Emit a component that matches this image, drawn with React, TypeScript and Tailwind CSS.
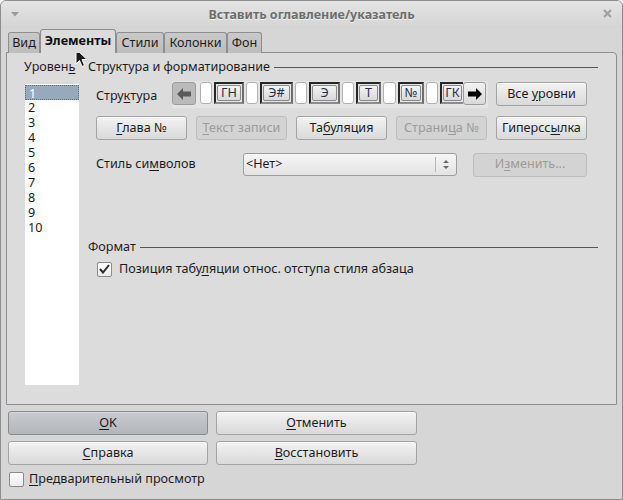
import * as React from "react"
import clsx from "clsx"

const U = ({ children }: { children: React.ReactNode }) => (
  <span className="underline decoration-1 underline-offset-[2px]">{children}</span>
)

function Btn({
  children,
  className,
  disabled,
  primary,
}: {
  children: React.ReactNode
  className?: string
  disabled?: boolean
  primary?: boolean
}) {
  return (
    <div
      className={clsx(
        "flex h-[24px] items-center justify-center rounded-[3px] border",
        disabled
          ? "border-[#bdbdbd] bg-[#d3d3d3] text-[#9b9b9b]"
          : primary
            ? "border-[#8a8a8a] bg-linear-to-b from-[#c8cbcf] to-[#b2b6ba] text-[#1c1c1c] shadow-[inset_0_1px_0_#d6d9dc]"
            : "border-[#a3a3a3] bg-linear-to-b from-[#f3f3f3] to-[#d9d9d9] text-[#1c1c1c] shadow-[inset_0_1px_0_#ffffff]",
        className
      )}
    >
      <span>{children}</span>
    </div>
  )
}

function Slot({ className }: { className?: string }) {
  return <div className={clsx("h-[22px] rounded-[3px] border border-[#b0b0b0] bg-white", className)} />
}

function Token({ label, className, clip }: { label: string; className?: string; clip?: boolean }) {
  return (
    <div
      className={clsx(
        "flex h-[22px] border-2 border-t-[#262626] border-l-[#262626] border-b-[#8c8c8c]",
        clip ? "border-r-0 overflow-hidden" : "border-r-[#6e6e6e]",
        className
      )}
    >
      <div className="m-px flex flex-1 items-center justify-center rounded-[2px] border border-[#8a8a8a] bg-linear-to-b from-[#f4f4f4] to-[#d9d9d9] leading-none text-[#1d2f55]">
        {label}
      </div>
    </div>
  )
}

function Cursor() {
  return (
    <svg className="absolute left-[75px] top-[48px]" width="13" height="20" viewBox="0 0 13 20">
      <path d="M1 1 L1 16 L4.5 12.5 L7 18.5 L9.5 17.5 L7 11.5 L12 11.5 Z" fill="#1a1a1a" stroke="#ffffff" strokeWidth="1" />
    </svg>
  )
}

export default function App() {
  const levels = ["1", "2", "3", "4", "5", "6", "7", "8", "9", "10"]
  return (
    <div className="relative h-[500px] w-[623px] overflow-hidden bg-white font-['Noto_Sans',sans-serif] text-[12.6px] text-[#1c1c1c]">
      <div className="flex h-full flex-col rounded-t-[6px] border border-[#8d8d8d] bg-[#d6d6d6]">
        {/* title bar */}
        <div className="relative flex h-[27px] shrink-0 items-center justify-center rounded-t-[5px] bg-linear-to-b from-[#e4e4e4] to-[#d4d4d4]">
          <svg className="absolute left-[10px] top-[11px]" width="8" height="5" viewBox="0 0 8 5">
            <path d="M0 0 L8 0 L4 4.5 Z" fill="#9a9a9a" />
          </svg>
          <span className="mt-[1px] text-[12.5px] font-bold text-[#6d6d6d] [text-shadow:0_1px_0_#f2f2f2]">
            Вставить оглавление/указатель
          </span>
          <svg className="absolute right-[10px] top-[8px]" width="9" height="9" viewBox="0 0 9 9">
            <path d="M1 1 L8 8 M8 1 L1 8" stroke="#a0a0a0" strokeWidth="2.2" />
          </svg>
        </div>

        {/* tabs */}
        <div className="relative z-10 -mb-px flex h-[25px] shrink-0 items-end pl-[7px]">
          <div className="flex h-[21px] w-[32px] items-center justify-center rounded-t-[3px] border border-b-0 border-[#8e8e8e] bg-linear-to-b from-[#c9c9c9] to-[#bdbdbd]">
            Вид
          </div>
          <div className="flex h-[24px] w-[76px] items-center justify-center rounded-t-[3px] border border-b-0 border-[#8e8e8e] bg-[#dcdcdc] pb-[1px] font-bold text-[#111]">
            Элементы
          </div>
          <div className="flex h-[21px] w-[48px] items-center justify-center rounded-t-[3px] border border-b-0 border-[#8e8e8e] bg-linear-to-b from-[#c9c9c9] to-[#bdbdbd]">
            Стили
          </div>
          <div className="flex h-[21px] w-[63px] items-center justify-center rounded-t-[3px] border border-b-0 border-[#8e8e8e] bg-linear-to-b from-[#c9c9c9] to-[#bdbdbd]">
            Колонки
          </div>
          <div className="flex h-[21px] w-[35px] items-center justify-center rounded-t-[3px] border border-b-0 border-[#8e8e8e] bg-linear-to-b from-[#c9c9c9] to-[#bdbdbd]">
            Фон
          </div>
        </div>

        {/* panel */}
        <div className="ml-[5px] flex h-[353px] w-[611px] shrink-0 rounded-tr-[4px] border border-[#8e8e8e] bg-[#dcdcdc]">
          <div className="flex flex-col pl-[17px] pt-[6px]">
            <div className="flex h-[17px] items-center">
              <span>
                Уровен<U>ь</U>
              </span>
            </div>
            <div className="ml-px mt-[8px] h-[301px] w-[54px] bg-white pt-px">
              {levels.map((l, i) => (
                <div
                  key={l}
                  className={clsx(
                    "h-[15px] pl-[3px] leading-[15px]",
                    i === 0 && "border border-dotted border-[#5c6b7a] bg-[#97a9bc] pl-[2px] leading-[13px] text-white"
                  )}
                >
                  {l}
                </div>
              ))}
            </div>
          </div>

          <div className="ml-[9px] flex w-[510px] flex-col pt-[6px]">
            <div className="flex h-[17px] items-center">
              <span>Структура и форматирование</span>
              <div className="ml-[4px] h-px flex-1 bg-[#555]" />
            </div>

            <div className="mt-[5px] flex h-[27px] pl-[8px]">
              <div className="flex w-[76px] items-center pt-[3px]">
                <span>
                  Стру<U>к</U>тура
                </span>
              </div>
              <div className="flex h-[27px] w-[316px] items-start gap-[2px] bg-[#e4e4e4] pt-px">
                <div className="mr-[2px] flex h-[23px] w-[24px] items-center justify-center rounded-[3px] border border-[#9c9c9c] bg-[#bababa]">
                  <svg width="14" height="12" viewBox="0 0 14 12">
                    <path d="M0 6 L6 0 L6 3.5 L14 3.5 L14 8.5 L6 8.5 L6 12 Z" fill="#5a5a5a" />
                  </svg>
                </div>
                <Slot className="w-[12px]" />
                <Token label="ГН" className="w-[30px]" />
                <Slot className="w-[12px]" />
                <Token label="Э#" className="w-[33px]" />
                <Slot className="w-[12px]" />
                <Token label="Э" className="w-[31px]" />
                <Slot className="w-[12px]" />
                <Token label="Т" className="w-[25px]" />
                <Slot className="w-[13px]" />
                <Token label="№" className="w-[26px]" />
                <Slot className="w-[12px]" />
                <Token label="ГК" className="w-[23px]" clip />
                <div className="-ml-[2px] flex h-[23px] w-[23px] items-center justify-center rounded-[3px] border border-[#9c9c9c] bg-linear-to-b from-[#f2f2f2] to-[#dadada]">
                  <svg width="14" height="12" viewBox="0 0 14 12">
                    <path d="M14 6 L8 0 L8 3.5 L0 3.5 L0 8.5 L8 8.5 L8 12 Z" fill="#000" />
                  </svg>
                </div>
              </div>
              <Btn className="ml-[8px] mt-px w-[91px]">
                Все <U>у</U>ровни
              </Btn>
            </div>

            <div className="mt-[8px] flex gap-[9px] pl-[8px]">
              <Btn className="w-[91px]">
                <U>Г</U>лава №
              </Btn>
              <Btn className="w-[91px]" disabled>
                <U>Т</U>екст записи
              </Btn>
              <Btn className="w-[91px]">
                Та<U>б</U>уляция
              </Btn>
              <Btn className="w-[91px]" disabled>
                Страни<U>ц</U>а №
              </Btn>
              <Btn className="w-[91px]">
                Гиперсс<U>ы</U>лка
              </Btn>
            </div>

            <div className="mt-[13px] flex h-[23px] items-center pl-[8px]">
              <div className="w-[147px]">
                Стиль си<U>м</U>волов
              </div>
              <div className="flex h-[23px] w-[214px] items-center rounded-[3px] border border-[#9d9d9d] bg-linear-to-b from-[#f6f6f6] to-[#e3e3e3]">
                <span className="flex-1 pl-[2px]">&lt;Нет&gt;</span>
                <div className="h-[15px] w-px bg-[#b5b5b5]" />
                <svg className="mx-[7px]" width="6" height="11" viewBox="0 0 6 11">
                  <path d="M0 4 L3 1 L6 4 Z M0 7 L3 10 L6 7 Z" fill="#6a6a6a" />
                </svg>
              </div>
              <Btn className="ml-[16px] h-[23px] w-[114px]" disabled>
                И<U>з</U>менить...
              </Btn>
            </div>

            <div className="mt-[63px] flex h-[17px] items-center">
              <span>Формат</span>
              <div className="ml-[4px] h-px flex-1 bg-[#555]" />
            </div>

            <div className="mt-[5px] flex h-[16px] items-center pl-[9px]">
              <div className="flex h-[15px] w-[15px] items-center justify-center rounded-[2px] border border-[#8a8a8a] bg-linear-to-b from-[#ffffff] to-[#ebebeb]">
                <svg width="11" height="10" viewBox="0 0 11 10">
                  <path d="M1 5 L4 8.5 L10 1" fill="none" stroke="#2b2b2b" strokeWidth="2" />
                </svg>
              </div>
              <span className="ml-[7px]">
                Позиция табу<U>л</U>яции относ. отступа стиля абзаца
              </span>
            </div>
          </div>
        </div>

        {/* bottom buttons */}
        <div className="mt-[6px] flex flex-col gap-[6px] pl-[7px]">
          <div className="flex gap-[8px]">
            <Btn className="w-[200px]" primary>
              <U>O</U>K
            </Btn>
            <Btn className="w-[201px]">
              <U>О</U>тменить
            </Btn>
          </div>
          <div className="flex gap-[8px]">
            <Btn className="w-[200px]">
              <U>С</U>правка
            </Btn>
            <Btn className="w-[201px]">
              <U>В</U>осстановить
            </Btn>
          </div>
        </div>
        <div className="mt-[5px] flex items-center pl-[8px]">
          <div className="h-[15px] w-[15px] rounded-[2px] border border-[#8a8a8a] bg-linear-to-b from-[#ffffff] to-[#ebebeb]" />
          <span className="ml-[5px]">
            <U>П</U>редварительный просмотр
          </span>
        </div>
      </div>
      <Cursor />
    </div>
  )
}
